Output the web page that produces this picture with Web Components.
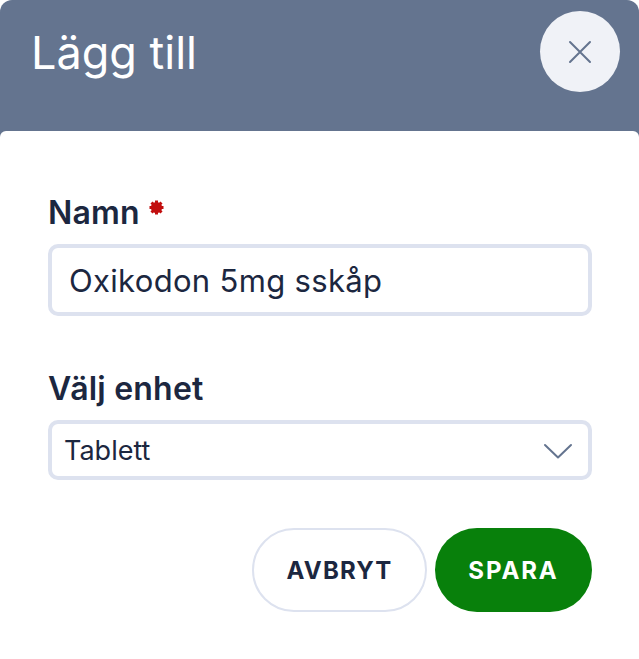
<!DOCTYPE html>
<html lang="sv"><head><meta charset="utf-8"><style>
html,body{margin:0;padding:0;background:#fff}
body{width:639px;height:659px;overflow:hidden;font-family:Inter,"Liberation Sans",sans-serif}
</style></head><body>
<add-dialog>
  <span slot="title">Lägg till</span>
  <form-field label="Namn" required style="margin-bottom:54px"><text-box>Oxikodon 5mg sskåp</text-box></form-field>
  <form-field label="Välj enhet"><select-box>Tablett</select-box></form-field>
  <pill-button slot="actions" style="width:175px;letter-spacing:1.2px">AVBRYT</pill-button>
  <pill-button slot="actions" primary style="width:157px;letter-spacing:1.9px">SPARA</pill-button>
</add-dialog>
<script>
function def(name,html){customElements.define(name,class extends HTMLElement{constructor(){super();this.attachShadow({mode:'open'}).innerHTML=html}})}
def('add-dialog',`<style>
:host{display:block;height:659px;background:#fff}
.wrap{background:linear-gradient(#64748f 0 140px,#fff 140px);border-radius:12px 12px 0 0;height:659px}
.head{height:131px;display:flex;justify-content:space-between;align-items:flex-start;box-sizing:border-box;padding:10px 19px 0 31px}
h1{margin:0;font:400 45px/86px Inter,sans-serif;color:#fff}
.close{width:80px;height:81px;margin-top:1px;border-radius:50%;background:#f0f2f7;display:flex;align-items:center;justify-content:center}
.body{background:#fff;border-radius:6px 6px 0 0;height:528px;box-sizing:border-box;padding:63px 47px 0 48px}
.actions{display:flex;justify-content:flex-end;gap:8px;margin-top:48px}
</style>
<div class="wrap"><div class="head"><h1><slot name="title"></slot></h1><div class="close"><svg width="24" height="24" viewBox="0 0 24 24" fill="none" stroke="#64748f" stroke-width="2" stroke-linecap="round"><path d="M2 2 22 22M22 2 2 22"/></svg></div></div>
<div class="body"><slot></slot><div class="actions"><slot name="actions"></slot></div></div></div>`);
customElements.define('form-field',class extends HTMLElement{constructor(){super();const r=this.hasAttribute('required');
this.attachShadow({mode:'open'}).innerHTML=`<style>
:host{display:block}
label{display:flex;align-items:flex-start;gap:9px;font:600 32px/38px Inter,sans-serif;letter-spacing:.2px;color:#1c2740;margin-bottom:12px}
svg{margin-top:6px}
</style><label><span id="t"></span>${r?'<svg width="15" height="15" viewBox="0 0 15 15" fill="#c20e0e"><circle cx="7.500" cy="7.500" r="5.600"/><g stroke="#c20e0e" stroke-width="3"><path d="M7.500 .5v14M.5 7.500h14M2.500 2.500l10 10M12.500 2.500l-10 10"/></g></svg>':''}</label><slot></slot>`}
connectedCallback(){this.shadowRoot.getElementById('t').textContent=this.getAttribute('label')}});
def('text-box',`<style>:host{display:flex;align-items:center;box-sizing:border-box;height:72px;border:4px solid #dde2ef;border-radius:10px;padding:0 17px;font:400 31px/1 Inter,sans-serif;letter-spacing:.32px;color:#1c2740;background:#fff}</style><slot></slot>`);
def('select-box',`<style>:host{display:flex;align-items:center;justify-content:space-between;box-sizing:border-box;height:60px;border:4px solid #dde2ef;border-radius:10px;padding:0 15px 0 12px;font:400 27px/1 Inter,sans-serif;color:#1c2740;background:#fff}svg{display:block;margin-top:2px}</style><span><slot></slot></span><svg width="30" height="18" viewBox="0 0 30 18" fill="none" stroke="#64748f" stroke-width="2" stroke-linecap="round" stroke-linejoin="round"><path d="M2 3 15 15.500 28 3"/></svg>`);
customElements.define('pill-button',class extends HTMLElement{constructor(){super();const p=this.hasAttribute('primary');
this.attachShadow({mode:'open'}).innerHTML=`<style>:host{display:flex;align-items:center;justify-content:center;box-sizing:border-box;height:84px;padding-top:2px;border-radius:42px;font:700 24px/1 Inter,sans-serif;${p?'background:#08800b;color:#fff':'background:#fff;color:#1c2740;border:2px solid #dde2ef'}}</style><slot></slot>`}});
</script></body></html>
